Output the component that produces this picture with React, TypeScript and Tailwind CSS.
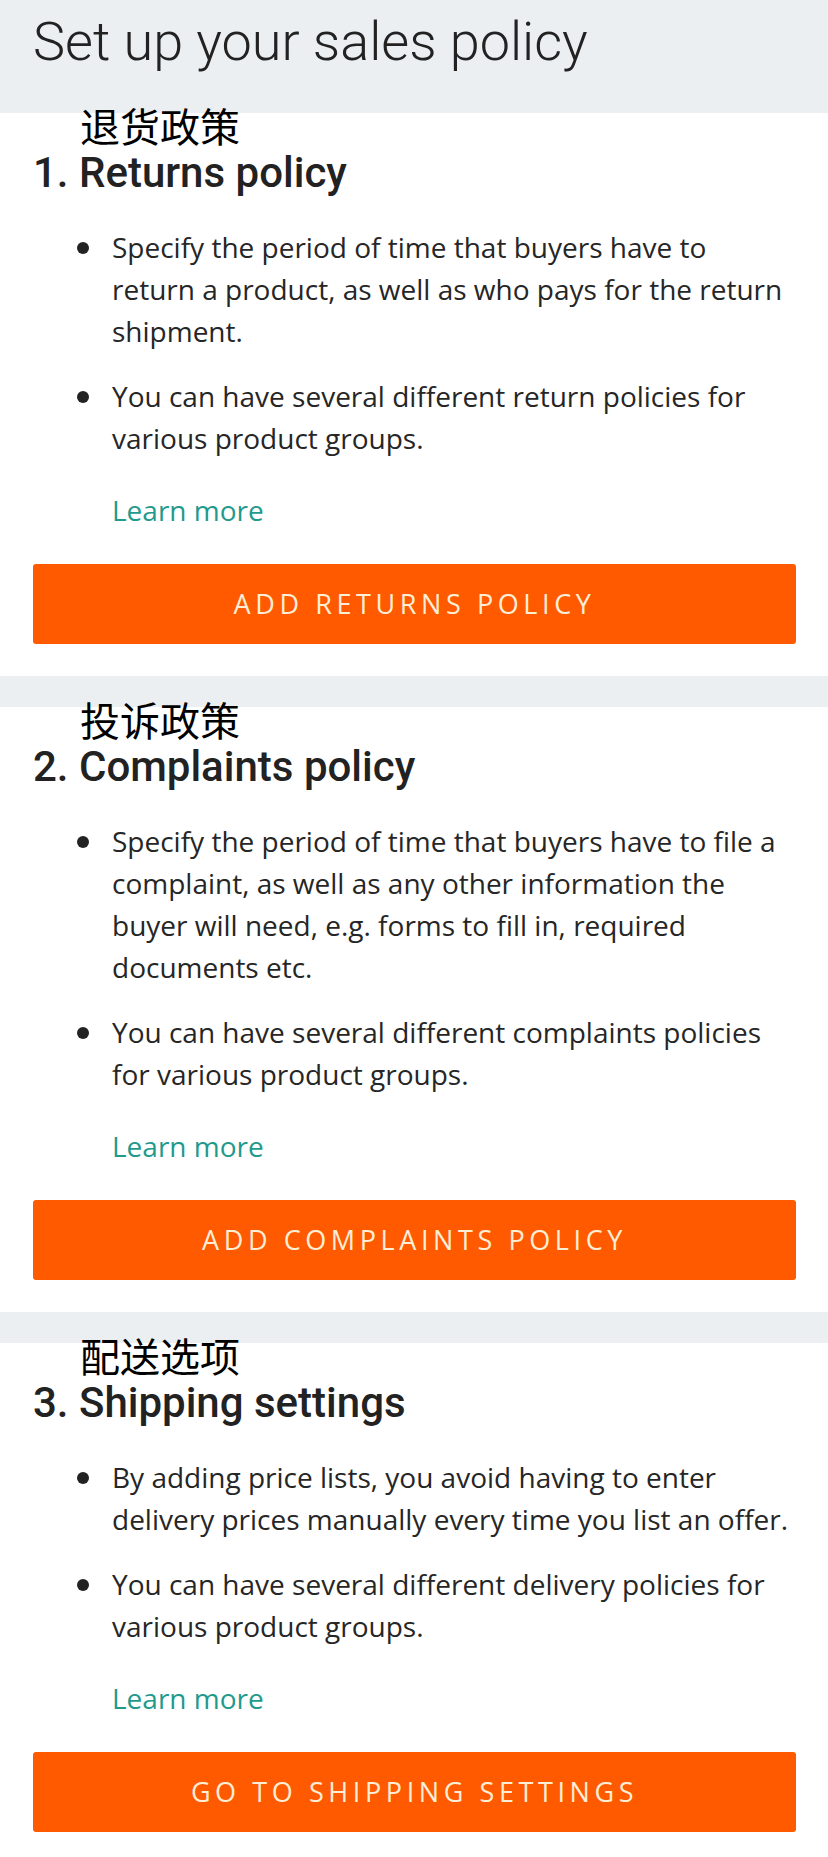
const sections = [
  {
    zh: '退货政策',
    title: '1. Returns policy',
    points: [
      'Specify the period of time that buyers have to return a product, as well as who pays for the return shipment.',
      'You can have several different return policies for various product groups.',
    ],
    action: 'Add returns policy',
  },
  {
    zh: '投诉政策',
    title: '2. Complaints policy',
    points: [
      'Specify the period of time that buyers have to file a complaint, as well as any other information the buyer will need, e.g. forms to fill in, required documents etc.',
      'You can have several different complaints policies for various product groups.',
    ],
    action: 'Add complaints policy',
  },
  {
    zh: '配送选项',
    title: '3. Shipping settings',
    points: [
      'By adding price lists, you avoid having to enter delivery prices manually every time you list an offer.',
      'You can have several different delivery policies for various product groups.',
    ],
    action: 'Go to shipping settings',
  },
]

function PolicySection({ zh, title, points, action }: (typeof sections)[number]) {
  return (
    <section className="pl-[33px] pr-[32px] pb-8">
      {/* annotation sits slightly over the grey band */}
      <div className="-mt-2 pl-[47px] text-[40px] leading-[40px] text-black font-['Noto_Sans_CJK_SC',sans-serif]">
        {zh}
      </div>
      <h2 className="mt-1 text-[42px] leading-[48px] font-medium text-[#222] font-['Roboto',sans-serif]">
        {title}
      </h2>
      <ul className="mt-[29px] flex flex-col gap-[23px] font-['Open_Sans',sans-serif] text-[28px] leading-[42px] text-[#262626]">
        {points.map((p) => (
          <li key={p} className="flex pl-[44px]">
            <span className="mt-4 h-3 w-3 shrink-0 rounded-full bg-[#222]" />
            <span className="ml-[23px] w-[680px] shrink-0">{p}</span>
          </li>
        ))}
      </ul>
      <a href="#" className="mt-[30px] block pl-[79px] font-['Open_Sans',sans-serif] text-[28px] leading-[42px] text-[#1f9a8c]">
        Learn more
      </a>
      <button className="mt-[33px] flex h-[80px] w-full items-center justify-center rounded-[3px] bg-[#ff5a00] font-['Open_Sans',sans-serif] text-[27px] font-normal uppercase tracking-[0.17em] text-[#ffeed6]">
        {action}
      </button>
    </section>
  )
}

export default function App() {
  return (
    <div className="w-[828px] min-h-[1857px] overflow-hidden bg-white">
      <header className="h-[113px] bg-[#eceff1] pl-[33px] pt-[10px]">
        <h1 className="text-[54px] leading-[63px] font-light text-[#222] font-['Roboto',sans-serif]">
          Set up your sales policy
        </h1>
      </header>
      {sections.map((s, i) => (
        <div key={s.title}>
          {i > 0 && <div className="h-[31px] bg-[#eceff1]" />}
          <PolicySection {...s} />
        </div>
      ))}
    </div>
  )
}
